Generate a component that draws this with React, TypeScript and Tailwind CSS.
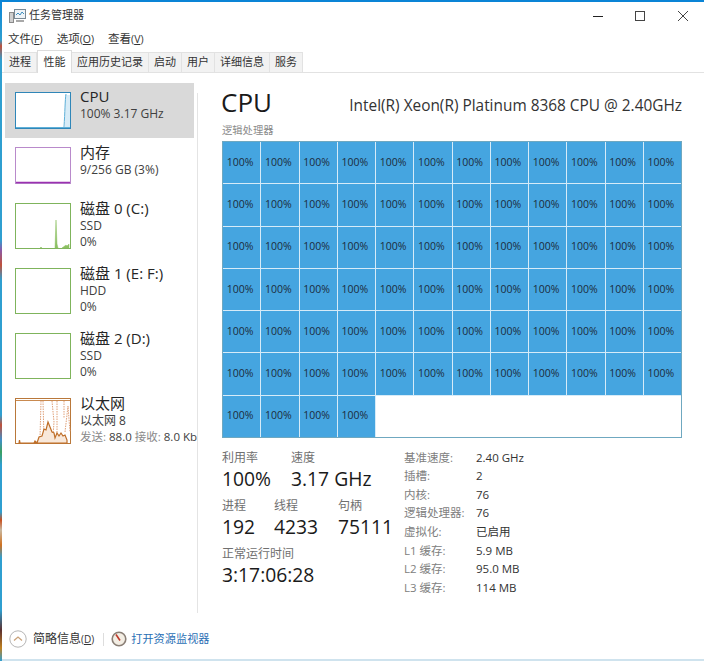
import React from "react";

const font = { fontFamily: '"Open Sans","Noto Sans","Noto Sans CJK SC",sans-serif' };

function Thumb({ color, children }: { color: string; children?: React.ReactNode }) {
  return (
    <svg width="56" height="46" viewBox="0 0 56 46" className="block shrink-0">
      <rect x="0.5" y="0.5" width="55" height="45" fill="white" stroke={color} />
      {children}
    </svg>
  );
}

function Item({ thumb, title, lines, className }: { thumb: React.ReactNode; title: string; lines: React.ReactNode[]; className: string }) {
  return (
    <div className={"flex gap-[9px] pl-[10px] ml-[3px] " + className}>
      {thumb}
      <div className="flex flex-col whitespace-nowrap -mt-[4px]">
        <div className="text-[15px] leading-[18px] text-[#262626] mb-[1px]">{title}</div>
        {lines.map((l, i) => (
          <div key={i} className="text-[12px] leading-[15.5px] text-[#404040]">{l}</div>
        ))}
      </div>
    </div>
  );
}

function Mn({ zh, k }: { zh: string; k: string }) {
  return (
    <span className="whitespace-nowrap">
      {zh}
      <span className="text-[10.5px]">(<span className="underline">{k}</span>)</span>
    </span>
  );
}

const tabs = ["进程", "性能", "应用历史记录", "启动", "用户", "详细信息", "服务"];
const specs: [string, string][] = [
  ["基准速度:", "2.40 GHz"],
  ["插槽:", "2"],
  ["内核:", "76"],
  ["逻辑处理器:", "76"],
  ["虚拟化:", "已启用"],
  ["L1 缓存:", "5.9 MB"],
  ["L2 缓存:", "95.0 MB"],
  ["L3 缓存:", "114 MB"],
];

function Stat({ label, value, className }: { label: string; value: string; className?: string }) {
  return (
    <div className={className}>
      <div className="text-[12px] leading-[16px] text-[#707070]">{label}</div>
      <div className="text-[19.3px] leading-[26px] text-[#1a1a1a] whitespace-nowrap">{value}</div>
    </div>
  );
}

export default function App() {
  return (
    <div style={font} className="w-[704px] h-[661px] bg-white flex overflow-hidden">
      <div className="w-[2px] shrink-0 bg-[linear-gradient(to_bottom,#0a84d6_0,#2f9fd0_40px,#c0503a_46px,#2f9fd0_60px,#2f9fd0_240px,#8a5aa8_250px,#c0503a_265px,#2f9fd0_280px,#2f9fd0_415px,#c0503a_425px,#3f8fc8_440px,#3aa060_452px,#2f9fd0_465px,#2f9fd0_512px,#c8501f_520px,#c8b8a0_530px,#d0701f_545px,#2f9fd0_558px,#2f9fd0_610px,#5a3030_630px,#c08020_648px,#2f9fd0_661px)]" />
      <div className="flex-1 min-w-0 flex flex-col border-t-2 border-t-[#0a84d6] border-b-2 border-b-[#cfe3ee]">
        {/* title bar */}
        <div className="h-[27px] flex items-center shrink-0">
          <svg width="18" height="16" viewBox="0 0 18 16" className="ml-[7px] mr-[2px]">
            <rect x="5.500" y="1.500" width="11" height="9" fill="#eef3f7" stroke="#7a8a96" />
            <path d="M7 7l2-2 2 2 2-3 2 2" fill="none" stroke="#3f8fc0" />
            <rect x="0.500" y="4.500" width="4" height="10" fill="#cfcfcf" stroke="#8a8a8a" />
            <rect x="7" y="12" width="8" height="2" fill="#a8a8a8" />
          </svg>
          <span className="text-[11px] text-[#333]">任务管理器</span>
          <div className="ml-auto flex items-center">
            <svg width="10" height="10" viewBox="0 0 10 10" className="mr-[32px]"><path d="M0 5.500h10" stroke="#222" /></svg>
            <svg width="10" height="10" viewBox="0 0 10 10" className="mr-[33px]"><rect x="0.500" y="0.500" width="9" height="9" fill="none" stroke="#444" /></svg>
            <svg width="10" height="10" viewBox="0 0 10 10" className="mr-[16px]"><path d="M0 0l10 10M10 0L0 10" stroke="#444" /></svg>
          </div>
        </div>
        {/* menu */}
        <div className="h-[20px] flex items-center gap-[14px] pl-[6px] text-[11.5px] text-[#333] shrink-0">
          <Mn zh="文件" k="F" />
          <Mn zh="选项" k="O" />
          <Mn zh="查看" k="V" />
        </div>
        {/* tabs */}
        <div className="h-[24px] flex items-end pl-[2px] border-b border-[#e2e2e2] shrink-0">
          {tabs.map((t) => (
            <div
              key={t}
              className={
                t === "性能"
                  ? "h-[23px] -mb-px bg-white border border-b-0 border-[#dcdcdc] px-[5.500px] flex items-center text-[11px] text-[#333]"
                  : "h-[20px] bg-[#f2f2f2] border-r border-t border-[#e2e2e2] px-[5px] flex items-center text-[11px] text-[#333]"
              }
            >
              {t}
            </div>
          ))}
        </div>
        {/* body */}
        <div className="flex-1 flex min-h-0">
          {/* sidebar */}
          <div className="w-[195px] shrink-0 flex flex-col overflow-hidden">
            <div className="h-[10px] shrink-0" />
            <div className="ml-[3px] mr-[3px] bg-[#d9d9d9] h-[55px] flex gap-[9px] pl-[10px] pt-[9px] shrink-0">
              <svg width="56" height="37" viewBox="0 0 56 37" className="block shrink-0">
                <rect x="0.500" y="0.500" width="55" height="36" fill="white" stroke="#2f86b8" />
                <path d="M50 36V3h5v33z" fill="#d8ecf7" />
                <path d="M49 35C50 20 50 8 51 2" fill="none" stroke="#5fb0d8" />
                <path d="M1 35.500h54" stroke="#5fb0d8" />
              </svg>
              <div className="whitespace-nowrap -mt-[5px]">
                <div className="text-[15px] leading-[18px] text-[#262626]">CPU</div>
                <div className="text-[12px] leading-[16px] text-[#404040] mt-[1px]">100% 3.17 GHz</div>
              </div>
            </div>
            <Item
              className="mt-[9px] h-[55px] shrink-0"
              title="内存"
              lines={["9/256 GB (3%)"]}
              thumb={
                <svg width="56" height="37" viewBox="0 0 56 37" className="block shrink-0">
                  <rect x="0.500" y="0.500" width="55" height="36" fill="white" stroke="#b98acb" />
                  <path d="M1 35.500h54" stroke="#9a32b0" strokeWidth="1.500" />
                </svg>
              }
            />
            <Item
              className="mt-[1px] h-[65px] shrink-0"
              title="磁盘 0 (C:)"
              lines={["SSD", "0%"]}
              thumb={
                <Thumb color="#7fb45c">
                  <path d="M25 45l1-1 1 1M40 45l1-28 1 24 1 4zM47 45l4-3 1 1 2-2v4z" fill="#8cc063" stroke="#8cc063" strokeWidth="0.500" />
                </Thumb>
              }
            />
            <Item className="h-[65px] shrink-0" title="磁盘 1 (E: F:)" lines={["HDD", "0%"]} thumb={<Thumb color="#7fb45c" />} />
            <Item className="h-[65px] shrink-0" title="磁盘 2 (D:)" lines={["SSD", "0%"]} thumb={<Thumb color="#7fb45c" />} />
            <Item
              className="h-[46px] shrink-0"
              title="以太网"
              lines={[
                "以太网 8",
                <span key="s" className="text-[11.500px]"><span className="text-[#8a8a8a]">发送:</span> 88.0 <span className="text-[#8a8a8a]">接收:</span> 8.0 Kbps</span>,
              ]}
              thumb={
                <Thumb color="#b9783a">
                  <path d="M1 2.500h54" stroke="#c98a50" />
                  <path d="M26 3L25 40M28 3L29 40M37 3L39 24L38 38M42 3V40M50 34L53 8L55 34M49 3V20" fill="none" stroke="#e0a078" strokeDasharray="1.500 1" />
                  <path d="M4 45l0.500-3 0.500 3H19l1-2 2 2 2-6 3-1 2-7 2 1 2-8 2 5 2 5 2 1 1 5 2-5 2 3 2-3 2 3 2-1 2 5v3z" fill="#f8e8da" stroke="#bf6e28" strokeWidth="1.200" />
                </Thumb>
              }
            />
          </div>
          {/* main */}
          <div className="w-[1px] bg-[#e4e4e4] mt-[20px] shrink-0" />
          <div className="flex-1 pl-[24px] pr-[22px] min-w-0 flex flex-col">
            <div className="flex items-end justify-between h-[45px] pt-[13px]">
              <div className="text-[26px] leading-[32px] text-[#1a1a1a] -ml-[1px]">CPU</div>
              <div className="text-[15.400px] leading-[22px] text-[#333] whitespace-nowrap pb-[1px]">Intel(R) Xeon(R) Platinum 8368 CPU @ 2.40GHz</div>
            </div>
            <div className="text-[10.300px] leading-[14px] text-[#8a8a8a] mt-[5px]">逻辑处理器</div>
            <div className="mt-[4px] h-[297px] grid grid-cols-12 grid-rows-7 gap-px bg-[#d6ebf8] border border-[#6fa8c0]">
              {Array.from({ length: 76 }).map((_, i) => (
                <div key={i} className="bg-[#45a5e0] flex items-center justify-center pr-[3px] text-[10.500px] text-[#1c2c3c]">100%</div>
              ))}
              <div className="col-span-8 bg-white" />
            </div>
            <div className="flex mt-[12px]">
              <div className="w-[182px] shrink-0 flex flex-col">
                <div className="flex">
                  <Stat label="利用率" value="100%" className="w-[69px]" />
                  <Stat label="速度" value="3.17 GHz" />
                </div>
                <div className="flex mt-[6px]">
                  <Stat label="进程" value="192" className="w-[52px]" />
                  <Stat label="线程" value="4233" className="w-[64px]" />
                  <Stat label="句柄" value="75111" />
                </div>
                <Stat label="正常运行时间" value="3:17:06:28" className="mt-[6px]" />
              </div>
              <div className="flex flex-col -mt-[2px]">
                {specs.map(([k, v]) => (
                  <div key={k} className="flex h-[18.600px] items-center text-[11.500px]">
                    <span className="w-[72px] text-[#808080]">{k}</span>
                    <span className="text-[#333]">{v}</span>
                  </div>
                ))}
              </div>
            </div>
          </div>
        </div>
        {/* footer */}
        <div className="h-[46px] shrink-0 flex items-center pl-[7px] pt-[6px]">
          <svg width="18" height="18" viewBox="0 0 18 18">
            <circle cx="9" cy="9" r="8.200" fill="white" stroke="#b5b5b5" />
            <path d="M5 10.500L9 7l4 3.500" fill="none" stroke="#c9a27a" strokeWidth="1.300" />
          </svg>
          <span className="ml-[6px] text-[12px] text-[#333] whitespace-nowrap">简略信息<span className="text-[10px]">(<span className="underline">D</span>)</span></span>
          <div className="w-px h-[13px] bg-[#ddd] ml-[9px] mr-[7px]" />
          <svg width="16" height="16" viewBox="0 0 16 16">
            <circle cx="8" cy="8" r="6.800" fill="#f3eee4" stroke="#8a7f76" strokeWidth="1.600" />
            <path d="M5 3.500l4 6" stroke="#c0392b" strokeWidth="1.600" />
          </svg>
          <span className="ml-[4px] text-[11.200px] text-[#2a6fb5]">打开资源监视器</span>
        </div>
      </div>
    </div>
  );
}
